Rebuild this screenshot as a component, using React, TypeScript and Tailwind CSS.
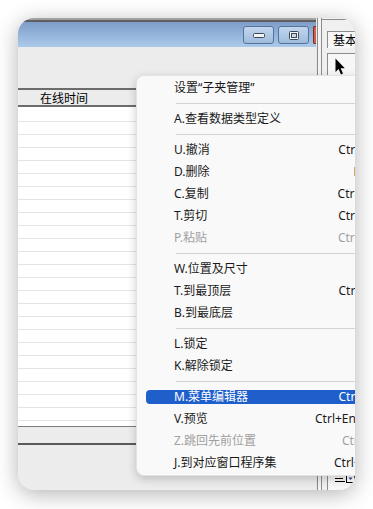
type Item =
  | { label: string; shortcut?: string; disabled?: boolean; active?: boolean }
  | 'sep';

const menu: Item[] = [
  { label: '设置“子夹管理”' },
  'sep',
  { label: 'A.查看数据类型定义' },
  'sep',
  { label: 'U.撤消', shortcut: 'Ctrl+Z' },
  { label: 'D.删除', shortcut: 'Del' },
  { label: 'C.复制', shortcut: 'Ctrl+C' },
  { label: 'T.剪切', shortcut: 'Ctrl+X' },
  { label: 'P.粘贴', shortcut: 'Ctrl+V', disabled: true },
  'sep',
  { label: 'W.位置及尺寸' },
  { label: 'T.到最顶层', shortcut: 'Ctrl+T' },
  { label: 'B.到最底层' },
  'sep',
  { label: 'L.锁定' },
  { label: 'K.解除锁定' },
  'sep',
  { label: 'M.菜单编辑器', shortcut: 'Ctrl+E', active: true },
  { label: 'V.预览', shortcut: 'Ctrl+Enter' },
  { label: 'Z.跳回先前位置', shortcut: 'Ctrl+J', disabled: true },
  { label: 'J.到对应窗口程序集', shortcut: 'Ctrl+W' },
];

const rows = Array.from({ length: 24 }, (_, i) => i);

const ContextMenu = () => (
  <div className="absolute left-[118px] top-[57px] w-[250px] rounded-[8px] border border-[#e3e3e3] bg-[#f9f9f9] py-[1px] shadow-[0_3px_10px_rgba(0,0,0,0.2)] font-['Noto_Sans','Noto_Sans_CJK_SC',sans-serif] text-[12px]">
    {menu.map((it, i) =>
      it === 'sep' ? (
        <div key={i} className="h-[9px] flex items-center pl-[39px]">
          <div className="h-px w-full bg-[#d3d3d3]" />
        </div>
      ) : (
        <div key={i} className="h-[22px] py-[4px] pl-[9px]">
          <div
            className={
              'h-[14px] flex items-center rounded-l-[4px] pl-[28px] pr-[13px] leading-[14px] whitespace-nowrap ' +
              (it.active ? 'bg-[#1f5fcc] text-white' : it.disabled ? 'text-[#a0a0a0]' : 'text-[#1a1a1a]')
            }
          >
            <span>{it.label}</span>
            {it.shortcut && <span className="ml-auto">{it.shortcut}</span>}
          </div>
        </div>
      )
    )}
  </div>
);

const TitleButton = ({ kind }: { kind: 'min' | 'max' }) => (
  <div className="w-[31px] h-[18px] rounded-[3px] border border-[#52739b] bg-linear-to-b from-[#c3d7ee] to-[#9fbbdc] flex items-center justify-center">
    {kind === 'min' ? (
      <svg width="12" height="5" viewBox="0 0 12 5">
        <rect x="0.5" y="0.5" width="11" height="4" rx="1" fill="#f4f4f4" stroke="#3c4a5c" />
      </svg>
    ) : (
      <svg width="10" height="9" viewBox="0 0 10 9">
        <rect x="0.5" y="0.5" width="9" height="8" rx="1" fill="#f4f4f4" stroke="#3c4a5c" />
        <rect x="2.5" y="2.5" width="5" height="4" fill="#c9d6e6" stroke="#3c4a5c" />
      </svg>
    )}
  </div>
);

const App = () => {
  return (
    <div className="w-[373px] h-[509px] bg-white p-[18px]">
      <div className="relative w-[337px] h-[472px] rounded-[16px] overflow-hidden flex shadow-[0_4px_22px_rgba(0,0,0,0.3)] bg-[#ececec]">
        {/* form designer */}
        <div className="w-[298px] flex flex-col shrink-0">
          <div className="h-[2px] bg-[#a2a2a2]" />
          <div className="h-[2px] bg-[#5e5e5e]" />
          <div className="h-[25px] bg-linear-to-b from-[#7e9ec9] to-[#abcaeb] flex justify-end items-start pt-[4px] gap-[4px]">
            <TitleButton kind="min" />
            <TitleButton kind="max" />
            <div className="w-[3px] h-[18px] rounded-l-[2px] border border-r-0 border-[#7a2a20] bg-[#d2604c]" />
          </div>
          <div className="h-[41px] bg-[#ececec]" />
          <div className="h-[19px] border-y-2 border-[#6c6c6c] bg-[#ececec] pl-[22px] text-[12px] leading-[15px] text-black font-['Noto_Sans_CJK_SC',sans-serif]">
            在线时间
          </div>
          <div className="bg-white pt-[2px] h-[319px]">
            {rows.map((r) => (
              <div key={r} className="h-[13px] border-b border-[#e4e4e4]" />
            ))}
          </div>
          <div className="h-px bg-[#7c7c7c]" />
          <div className="h-[16px] bg-[#ececec]" />
          <div className="h-[2px] bg-[#5a5a5a]" />
          <div className="flex-1 bg-[#ececec]" />
        </div>

        {/* splitter */}
        <div className="w-[6px] flex shrink-0 bg-[#f3f3f3]">
          <div className="w-px bg-[#e6e6e6]" />
          <div className="w-px bg-[#8c8c8c]" />
          <div className="w-[3px]" />
          <div className="w-px bg-[#8c8c8c]" />
        </div>

        {/* toolbox */}
        <div className="flex-1 flex flex-col bg-[#f0f0f0] pt-px">
          <div className="h-px bg-[#8c8c8c]" />
          <div className="pl-[5px] pt-[11px]">
            <div className="h-[17px] border-l border-t border-[#8c8c8c] bg-[#f7f7f7] pl-[5px] text-[12px] leading-[16px] text-black whitespace-nowrap font-['Noto_Sans_CJK_SC',sans-serif]">
              基本
            </div>
          </div>
          <div className="flex-1 ml-[5px] mt-[5px] border-l border-t border-[#8c8c8c] bg-[#f7f7f7] flex flex-col pl-[7px]">
            <svg width="10" height="17" viewBox="0 0 10 17" className="mt-[4px]">
              <path d="M0.5 0.5 L0.5 14 L3.6 11 L6 16.5 L8 15.6 L5.6 10.3 L9.8 10.3 Z" fill="#000" />
            </svg>
            <div className="mt-auto mb-[7px] flex items-center gap-[1px]">
              <svg width="20" height="8" viewBox="0 0 20 8">
                <path d="M0 0.5H10M0 3.5H8M0 6.5H10" stroke="#000" strokeWidth="1" />
                <rect x="11.5" y="0.5" width="8" height="7" fill="#fff" stroke="#000" />
                <path d="M13.5 2.5H17.5L15.5 5Z" fill="#2a3a8c" />
              </svg>
            </div>
          </div>
        </div>

        <ContextMenu />
      </div>
    </div>
  );
};

export default App;
